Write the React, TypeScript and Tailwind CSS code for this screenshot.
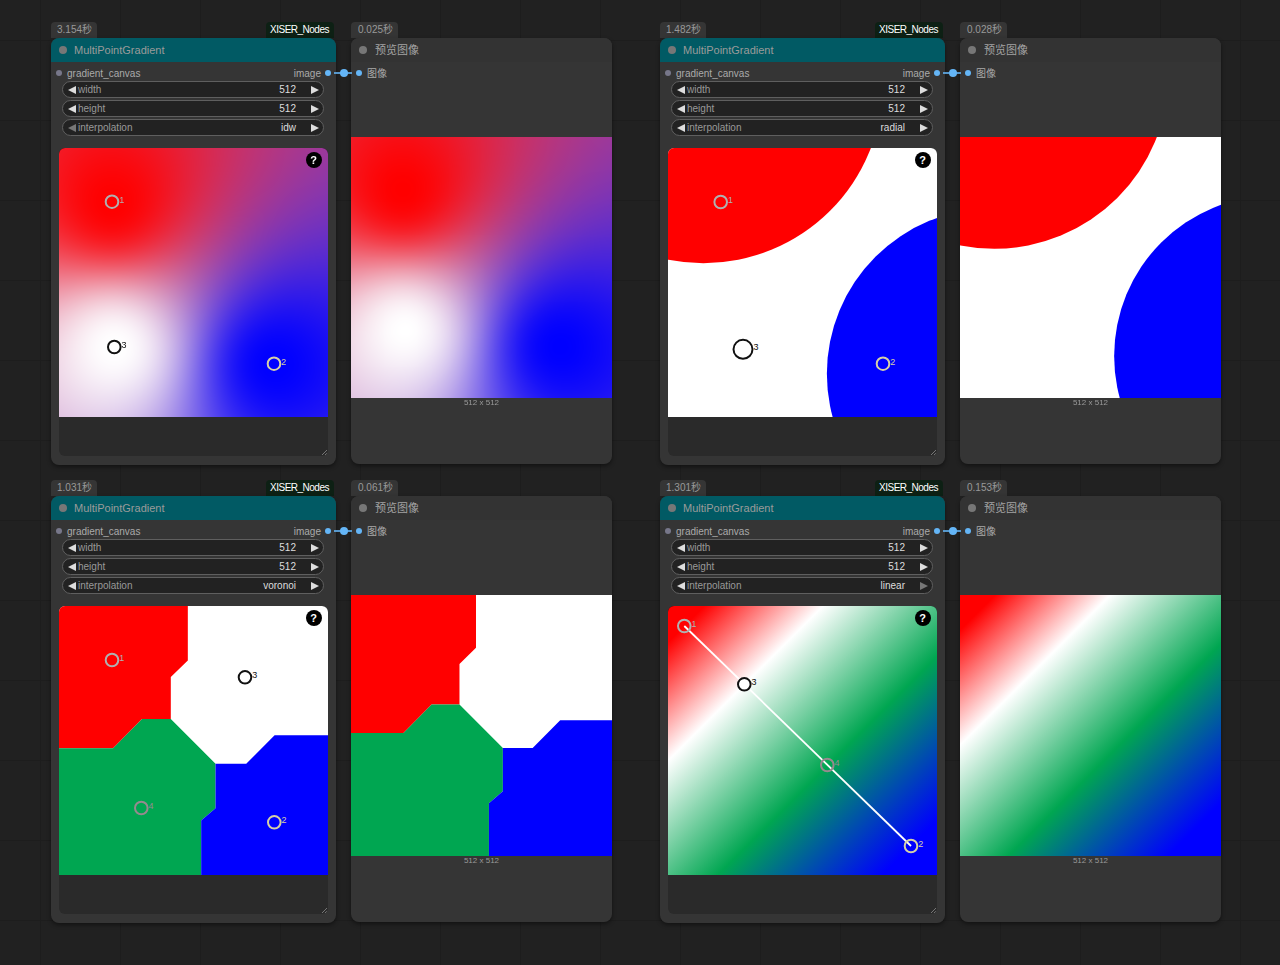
import { useEffect, useRef } from "react";

type Mode = "idw" | "radial" | "voronoi" | "linear";
type Mark = { n: number; x: number; y: number; c: string; r?: number };

const MARKS: Record<Mode, Mark[]> = {
  idw: [
    { n: 1, x: 53, y: 53.7, c: "#b0b0b0" },
    { n: 2, x: 215, y: 215.7, c: "#d6d0a8" },
    { n: 3, x: 55.3, y: 199, c: "#111111" },
  ],
  radial: [
    { n: 1, x: 52.7, y: 54, c: "#b0b0b0" },
    { n: 2, x: 215, y: 215.7, c: "#d6d0a8" },
    { n: 3, x: 75, y: 201.3, c: "#111111", r: 9.5 },
  ],
  voronoi: [
    { n: 1, x: 53, y: 54, c: "#b0b0b0" },
    { n: 2, x: 215.3, y: 216.3, c: "#d6d0a8" },
    { n: 3, x: 186, y: 71.3, c: "#111111" },
    { n: 4, x: 82.3, y: 202, c: "#968a8e" },
  ],
  linear: [
    { n: 1, x: 16.3, y: 20, c: "#b0b0b0" },
    { n: 2, x: 243, y: 240, c: "#d6d0a8" },
    { n: 3, x: 76.3, y: 78.3, c: "#111111" },
    { n: 4, x: 159.3, y: 159, c: "#968a8e" },
  ],
};

function IdwImage() {
  const ref = useRef<HTMLCanvasElement>(null);
  useEffect(() => {
    const cv = ref.current;
    if (!cv) return;
    const ctx = cv.getContext("2d");
    if (!ctx) return;
    const S = 269;
    const pts = [
      { x: 53, y: 53.7, c: [255, 0, 0] },
      { x: 215, y: 215.7, c: [0, 0, 255] },
      { x: 55.3, y: 199, c: [255, 255, 255] },
    ];
    const img = ctx.createImageData(S, S);
    for (let y = 0; y < S; y++) {
      for (let x = 0; x < S; x++) {
        let sw = 0;
        const col = [0, 0, 0];
        for (const p of pts) {
          const d2 = (x - p.x) ** 2 + (y - p.y) ** 2 + 1;
          const w = 1 / d2 ** 1.05;
          sw += w;
          col[0] += w * p.c[0];
          col[1] += w * p.c[1];
          col[2] += w * p.c[2];
        }
        const i = (y * S + x) * 4;
        img.data[i] = col[0] / sw;
        img.data[i + 1] = col[1] / sw;
        img.data[i + 2] = col[2] / sw;
        img.data[i + 3] = 255;
      }
    }
    ctx.putImageData(img, 0, 0);
  }, []);
  return <canvas ref={ref} width={269} height={269} className="block w-full h-full" />;
}

function RadialImage() {
  return (
    <svg viewBox="24 22 806 808" preserveAspectRatio="none" className="block w-full h-full">
      <rect x="24" y="22" width="806" height="808" fill="#ffffff" />
      <circle cx="130" cy="-169" r="537" fill="#ff0000" />
      <circle cx="997" cy="700" r="497" fill="#0000ff" />
    </svg>
  );
}

function VoronoiImage() {
  return (
    <svg viewBox="26 18 806 810" preserveAspectRatio="none" className="block w-full h-full">
      <rect x="26" y="18" width="806" height="810" fill="#ffffff" />
      <polygon points="26,18 412,18 412,182 361,232 361,358 275,358 188,446 26,446" fill="#ff0000" />
      <polygon points="26,446 188,446 275,358 361,358 495,493 495,627 452,664 452,828 26,828" fill="#00a651" />
      <polygon points="495,493 587,493 672,407 832,407 832,828 452,828 452,664 495,627" fill="#0000ff" />
    </svg>
  );
}

function LinearImage({ id }: { id: string }) {
  return (
    <svg viewBox="54 50 806 807" preserveAspectRatio="none" className="block w-full h-full">
      <defs>
        <linearGradient id={id} gradientUnits="userSpaceOnUse" x1="103" y1="110" x2="773" y2="780">
          <stop offset="0" stopColor="#ff0000" />
          <stop offset="0.265" stopColor="#ffffff" />
          <stop offset="0.632" stopColor="#00a651" />
          <stop offset="1" stopColor="#0000ff" />
        </linearGradient>
      </defs>
      <rect x="54" y="50" width="806" height="807" fill={`url(#${id})`} />
    </svg>
  );
}

function Picture({ mode, id }: { mode: Mode; id: string }) {
  if (mode === "idw") return <IdwImage />;
  if (mode === "radial") return <RadialImage />;
  if (mode === "voronoi") return <VoronoiImage />;
  return <LinearImage id={id} />;
}

function Arrow({ dir, dim }: { dir: "l" | "r"; dim?: boolean }) {
  return (
    <svg viewBox="0 0 8 8" className="w-2 h-2 shrink-0">
      <polygon points={dir === "l" ? "8,0 8,8 0,4" : "0,0 0,8 8,4"} fill={dim ? "#777777" : "#dddddd"} />
    </svg>
  );
}

function Pill({ label, value, dimL, dimR }: { label: string; value: string; dimL?: boolean; dimR?: boolean }) {
  return (
    <div className="h-[17px] flex items-center rounded-full border border-[#5f5f5f] bg-[#222222] pl-[5px] pr-[4px] text-[10px]">
      <Arrow dir="l" dim={dimL} />
      <span className="ml-[2px] flex-1 text-[#999999]">{label}</span>
      <span className="mr-[15px] text-[#dddddd]">{value}</span>
      <Arrow dir="r" dim={dimR} />
    </div>
  );
}

function Markers({ mode }: { mode: Mode }) {
  const m = MARKS[mode];
  return (
    <svg viewBox="0 0 269 269" className="absolute inset-0 w-full h-full">
      {mode === "linear" && <line x1={m[0].x} y1={m[0].y} x2={m[1].x} y2={m[1].y} stroke="#ffffff" strokeWidth="1.8" />}
      {m.map((k) => {
        const r = k.r ?? 6.3;
        return (
          <g key={k.n}>
            <circle cx={k.x} cy={k.y} r={r} fill={mode === "linear" && k.n === 3 ? "#ffffff" : "none"} stroke={k.c} strokeWidth="2" />
            <text x={k.x + r + 1} y={k.y + 1} fontSize="9" fill={k.c}>
              {k.n}
            </text>
          </g>
        );
      })}
    </svg>
  );
}

function Pair({
  mode,
  left,
  top,
  t1,
  t2,
  dimL,
  dimR,
}: {
  mode: Mode;
  left: number;
  top: number;
  t1: string;
  t2: string;
  dimL?: boolean;
  dimR?: boolean;
}) {
  return (
    <div className="absolute flex gap-[15px]" style={{ left, top }}>
      <div className="w-[285px] flex flex-col">
        <div className="h-4 flex justify-between">
          <div className="w-[46px] rounded-t bg-[#353535] pl-[6px] text-[10px] leading-4 text-[#999999]">{t1}</div>
          <div className="mr-[2px] rounded-t bg-[#0d2014] pl-[4px] pr-[5px] text-[10px] tracking-[-0.5px] leading-[15px] text-white">XISER_Nodes</div>
        </div>
        <div className="h-[427px] rounded-lg bg-[#353535] shadow-[0_2px_4px_rgba(0,0,0,0.45)] flex flex-col">
          <div className="h-6 shrink-0 rounded-t-lg bg-[#015a64] flex items-center pl-[8px]">
            <span className="w-2 h-2 rounded-full bg-[#777777]" />
            <span className="ml-[7px] text-[11px] text-[#9a9a9a]">MultiPointGradient</span>
          </div>
          <div className="h-[19px] shrink-0 flex items-center px-[5px] pt-[3px] text-[10px]">
            <span className="w-[6px] h-[6px] rounded-full bg-[#77778a]" />
            <span className="ml-[5px] flex-1 text-[#aaaaaa]">gradient_canvas</span>
            <span className="text-[#aaaaaa]">image</span>
            <span className="ml-[4px] w-[6px] h-[6px] rounded-full bg-[#64b5f6]" />
          </div>
          <div className="ml-[11px] w-[262px] flex flex-col gap-[2px]">
            <Pill label="width" value="512" />
            <Pill label="height" value="512" />
            <Pill label="interpolation" value={mode} dimL={dimL} dimR={dimR} />
          </div>
          <div className="relative ml-[7.5px] w-[269px] mt-3 h-[308px] rounded-md bg-[#2a2a2a] overflow-hidden">
            <div className="relative w-full h-[269px] bg-black">
              <Picture mode={mode} id={`g-${mode}-a`} />
              <Markers mode={mode} />
              <div className="absolute right-[6px] top-[4px] w-4 h-4 rounded-full bg-black flex items-center justify-center text-[11px] font-bold text-white">
                ?
              </div>
            </div>
            <svg viewBox="0 0 7 7" className="absolute right-0 bottom-0 w-[7px] h-[7px]">
              <path d="M1 6 L6 1 M4 6 L6 4" stroke="#8a8a8a" strokeWidth="0.8" />
            </svg>
          </div>
        </div>
      </div>
      <div className="w-[261px] flex flex-col">
        <div className="h-4">
          <div className="w-[47px] h-4 rounded-t bg-[#353535] pl-[7px] text-[10px] leading-4 text-[#999999]">{t2}</div>
        </div>
        <div className="h-[426px] rounded-lg bg-[#353535] shadow-[0_2px_4px_rgba(0,0,0,0.45)] flex flex-col">
          <div className="h-6 shrink-0 rounded-t-lg bg-[#333333] flex items-center pl-[8px]">
            <span className="w-2 h-2 rounded-full bg-[#777777]" />
            <span className="ml-[8px] text-[11px] text-[#a3a3a3]">预览图像</span>
          </div>
          <div className="h-[22px] shrink-0 flex items-center pl-[5px] text-[10px]">
            <span className="w-[6px] h-[6px] rounded-full bg-[#64b5f6]" />
            <span className="ml-[5px] text-[#aaaaaa]">图像</span>
          </div>
          <div className="mt-[53px] w-[261px] h-[261px] shrink-0">
            <Picture mode={mode} id={`g-${mode}-b`} />
          </div>
          <div className="mt-[-1px] text-center text-[8px] text-[#999999]">512 x 512</div>
        </div>
      </div>
      <svg viewBox="0 0 20 10" className="absolute left-[283px] top-[46px] w-5 h-[10px]">
        <line x1="0" y1="5" x2="18" y2="5" stroke="#64b5f6" strokeWidth="1.6" />
        <circle cx="10" cy="5" r="4" fill="#64b5f6" />
      </svg>
    </div>
  );
}

export default function App() {
  return (
    <div className="relative w-[1280px] h-[965px] overflow-hidden bg-[#212121] bg-[linear-gradient(#1d1d1d_1px,transparent_1px),linear-gradient(90deg,#1d1d1d_1px,transparent_1px)] bg-[size:80px_80px] bg-[position:40px_40px] font-['Liberation_Sans','Noto_Sans_CJK_SC',sans-serif]">
      <Pair mode="idw" left={51} top={22} t1="3.154秒" t2="0.025秒" dimL />
      <Pair mode="radial" left={660} top={22} t1="1.482秒" t2="0.028秒" />
      <Pair mode="voronoi" left={51} top={480} t1="1.031秒" t2="0.061秒" />
      <Pair mode="linear" left={660} top={480} t1="1.301秒" t2="0.153秒" dimR />
    </div>
  );
}
